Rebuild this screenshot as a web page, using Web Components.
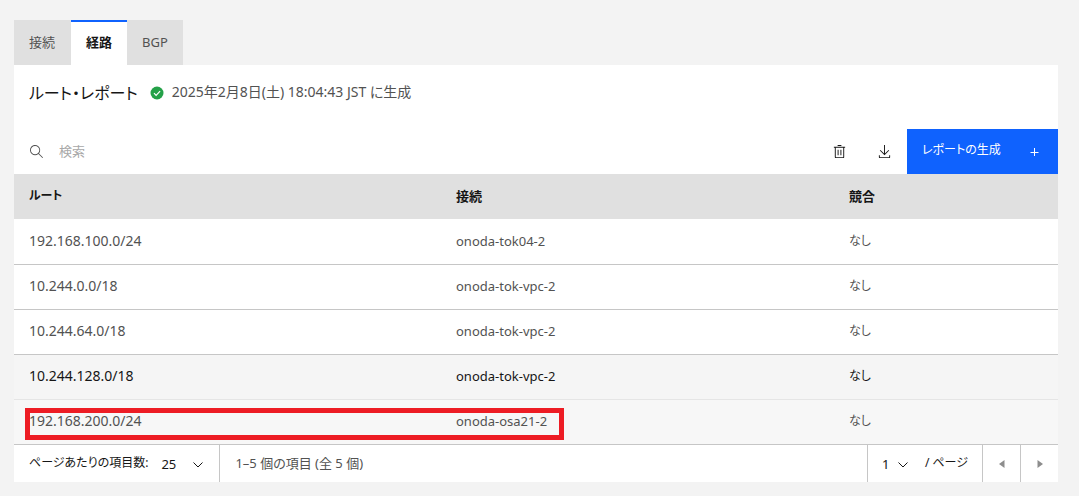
<!DOCTYPE html>
<html lang="ja">
<head>
<meta charset="utf-8">
<meta name="viewport" content="width=device-width, initial-scale=1">
<title>ルート・レポート</title>
<style>
  body {
    --text: #161616;
    --text-secondary: #525252;
    --line: #c6c6c6;
    --accent: #0f62fe;
    margin: 0;
    padding: 20px 21px 14px 14px;
    background: #f3f3f3;
    color: var(--text);
    font: 13px/18px "Noto Sans", "Noto Sans CJK JP", sans-serif;
    font-feature-settings: "palt";
  }
</style>
</head>
<body>
<route-tabs>
  <route-tab>接続</route-tab>
  <route-tab selected>経路</route-tab>
  <route-tab>BGP</route-tab>
</route-tabs>
<report-panel>
  <report-title slot="title" heading="ルート・レポート">2025年2月8日(土) 18:04:43 JST に生成</report-title>
  <report-toolbar>レポートの生成</report-toolbar>
  <route-table></route-table>
  <table-pagination>1–5 個の項目 (全 5 個)</table-pagination>
</report-panel>

<script>
class RouteTabs extends HTMLElement {
  constructor() {
    super();
    this.attachShadow({ mode: "open" });
  }

  connectedCallback() {
    this.shadowRoot.innerHTML = `
      <style>
        :host { display: block; }
        nav { display: flex; }
      </style>
      <nav role="tablist"><slot></slot></nav>
    `;
  }
}

class RouteTab extends HTMLElement {
  constructor() {
    super();
    this.attachShadow({ mode: "open" });
  }

  connectedCallback() {
    this.shadowRoot.innerHTML = `
      <style>
        :host { display: block; }
        :host(:first-child) { border-right: 1px solid #e0e0e0; }
        button {
          display: block;
          height: 45px;
          padding: 0 15px 2px;
          border: 0;
          background: #e0e0e0;
          color: var(--text-secondary);
          font: inherit;
          font-feature-settings: inherit;
          cursor: pointer;
        }
        :host([selected]) button {
          background: #fff;
          box-shadow: inset 0 2px var(--accent);
          color: var(--text);
          font-weight: 600;
        }
      </style>
      <button role="tab" aria-selected="${this.hasAttribute("selected")}"><slot></slot></button>
    `;
  }
}

class ReportPanel extends HTMLElement {
  constructor() {
    super();
    this.attachShadow({ mode: "open" });
  }

  connectedCallback() {
    this.shadowRoot.innerHTML = `
      <style>
        :host { display: block; background: #fff; }
      </style>
      <slot name="title"></slot>
      <slot></slot>
    `;
  }
}

class ReportTitle extends HTMLElement {
  constructor() {
    super();
    this.attachShadow({ mode: "open" });
  }

  connectedCallback() {
    this.shadowRoot.innerHTML = `
      <style>
        :host {
          display: flex;
          align-items: center;
          height: 56px;
          padding: 0 15px 8px;
        }
        h1 { margin: 0 12px 0 0; font-size: 16px; font-weight: 400; line-height: 24px; }
        svg { margin-right: 8px; }
        p { margin: 0; padding-bottom: 2px; color: var(--text-secondary); font-size: 14px; }
      </style>
      <h1>${this.getAttribute("heading")}</h1>
      <svg width="14" height="14" viewBox="0 0 14 14" aria-hidden="true">
        <circle cx="7" cy="7" r="6.5" fill="#24a148"/>
        <path d="M4 7.2l2.1 2.1 4-4.1" fill="none" stroke="#fff" stroke-width="1.2"/>
      </svg>
      <p><slot></slot></p>
    `;
  }
}

class ReportToolbar extends HTMLElement {
  constructor() {
    super();
    this.attachShadow({ mode: "open" });
  }

  connectedCallback() {
    this.shadowRoot.innerHTML = `
      <style>
        :host { display: flex; height: 45px; }
        .search {
          display: flex;
          flex: 1;
          align-items: center;
          gap: 15px;
          padding-left: 15px;
        }
        input {
          flex: 1;
          min-width: 0;
          padding: 0 0 2px;
          border: 0;
          outline: 0;
          background: none;
          color: var(--text);
          font: inherit;
        }
        input::placeholder { color: #a8a8a8; opacity: 1; }
        button {
          display: flex;
          align-items: center;
          border: 0;
          padding: 0;
          font: inherit;
          font-feature-settings: inherit;
          cursor: pointer;
        }
        .icon { justify-content: center; width: 45px; background: none; color: var(--text); }
        .create {
          justify-content: space-between;
          width: 151px;
          padding: 0 15px;
          background: var(--accent);
          color: #fff;
          font-size: 12px;
        }
        .create span { padding-bottom: 3px; }
      </style>
      <label class="search">
        <svg width="15" height="15" viewBox="0 0 16 16" fill="#525252" aria-hidden="true">
          <path d="M15 14.3L10.7 10c1.9-2.3 1.6-5.8-.7-7.7S4.2.7 2.3 3 .7 8.8 3 10.7c2 1.7 5 1.7 7 0l4.3 4.3.7-.7zM2 6.5C2 4 4 2 6.500 2S11 4 11 6.500 9 11 6.500 11 2 9 2 6.500z"/>
        </svg>
        <input type="search" placeholder="検索" aria-label="検索">
      </label>
      <button class="icon" aria-label="削除">
        <svg width="15" height="15" viewBox="0 0 32 32" fill="currentColor" aria-hidden="true">
          <path d="M12 12h2v12h-2zM18 12h2v12h-2zM4 6v2h2v20a2 2 0 002 2h16a2 2 0 002-2V8h2V6zM8 28V8h16v20zM12 2h8v2h-8z"/>
        </svg>
      </button>
      <button class="icon" aria-label="ダウンロード">
        <svg width="15" height="15" viewBox="0 0 32 32" fill="currentColor" aria-hidden="true">
          <path d="M26 24v4H6v-4H4v4a2 2 0 002 2h20a2 2 0 002-2v-4zM26 14l-1.400-1.400L17 20.200V2h-2v18.200l-7.600-7.600L6 14l10 10z"/>
        </svg>
      </button>
      <button class="create">
        <span><slot></slot></span>
        <svg width="16" height="16" viewBox="0 0 16 16" fill="none" stroke="currentColor" aria-hidden="true">
          <path d="M7.500 4v8M3.500 8.500h8"/>
        </svg>
      </button>
    `;
  }
}

const routes = [
  { route: "192.168.100.0/24", connection: "onoda-tok04-2", conflict: "なし" },
  { route: "10.244.0.0/18", connection: "onoda-tok-vpc-2", conflict: "なし" },
  { route: "10.244.64.0/18", connection: "onoda-tok-vpc-2", conflict: "なし" },
  { route: "10.244.128.0/18", connection: "onoda-tok-vpc-2", conflict: "なし", state: "active" },
  { route: "192.168.200.0/24", connection: "onoda-osa21-2", conflict: "なし", state: "leaving" },
];

class RouteTable extends HTMLElement {
  constructor() {
    super();
    this.attachShadow({ mode: "open" });
  }

  connectedCallback() {
    this.shadowRoot.innerHTML = `
      <style>
        :host { display: block; position: relative; }
        table {
          width: 100%;
          table-layout: fixed;
          border-spacing: 0;
        }
        .connection { width: 393px; }
        .conflict { width: 224px; }
        th, td {
          box-sizing: border-box;
          height: 45px;
          padding: 0 15px 2px;
          text-align: left;
        }
        th { background: #e0e0e0; font-weight: 600; }
        th:first-child { font-size: 12px; }
        td { border-top: 1px solid var(--line); color: var(--text-secondary); }
        td:first-child { font-size: 14px; }
        td:last-child { font-size: 12px; }
        tr:first-child td { border-color: transparent; }
        .active td { background: #f5f5f5; color: var(--text); }
        .leaving td { background: #f7f7f7; border-color: #e5e5e5; }
        /* marker drawn over the last row */
        .marker {
          position: absolute;
          box-sizing: border-box;
          left: 11px;
          bottom: 4px;
          width: 539px;
          height: 32px;
          border: 5px solid #ed1c24;
          pointer-events: none;
        }
      </style>
      <table>
        <colgroup><col><col class="connection"><col class="conflict"></colgroup>
        <thead>
          <tr><th scope="col">ルート</th><th scope="col">接続</th><th scope="col">競合</th></tr>
        </thead>
        <tbody>
          ${routes.map((r) => `
            <tr class="${r.state || ""}">
              <td>${r.route}</td><td>${r.connection}</td><td>${r.conflict}</td>
            </tr>`).join("")}
        </tbody>
      </table>
      <div class="marker"></div>
    `;
  }
}

class TablePagination extends HTMLElement {
  constructor() {
    super();
    this.attachShadow({ mode: "open" });
  }

  connectedCallback() {
    const chevron = `
      <svg width="12" height="12" viewBox="0 0 12 12" fill="none" stroke="#161616" aria-hidden="true">
        <path d="M1.500 4.500L6 9l4.500-4.500"/>
      </svg>`;

    this.shadowRoot.innerHTML = `
      <style>
        :host { display: flex; height: 37px; border-top: 1px solid var(--line); }
        .size, .count, .page {
          display: flex;
          align-items: center;
        }
        label, .count { padding-bottom: 2px; }
        label { font-size: 12px; }
        .size { gap: 13px; padding: 0 15px; border-right: 1px solid var(--line); }
        .count { flex: 1; padding-left: 15px; color: var(--text-secondary); }
        .page { gap: 16px; padding: 0 14px; border-left: 1px solid var(--line); }
        .select { display: grid; align-items: center; }
        .select > * { grid-area: 1 / 1; }
        .select svg { justify-self: end; pointer-events: none; }
        select {
          appearance: none;
          width: 43px;
          padding: 0;
          border: 0;
          background: none;
          color: var(--text);
          font: inherit;
        }
        .page select { width: 27px; }
        button {
          display: flex;
          align-items: center;
          justify-content: center;
          width: 38px;
          padding: 0;
          border: 0;
          border-left: 1px solid var(--line);
          background: none;
        }
      </style>
      <div class="size">
        <label for="size">ページあたりの項目数:</label>
        <span class="select">
          <select id="size"><option>25</option></select>
          ${chevron}
        </span>
      </div>
      <span class="count"><slot></slot></span>
      <div class="page">
        <span class="select">
          <select id="page"><option>1</option></select>
          ${chevron}
        </span>
        <label for="page">/ ページ</label>
      </div>
      <button aria-label="前のページ" disabled>
        <svg width="6" height="8" viewBox="0 0 6 8" fill="#8d8d8d" aria-hidden="true"><path d="M5.500 0v8L0 4z"/></svg>
      </button>
      <button aria-label="次のページ" disabled>
        <svg width="6" height="8" viewBox="0 0 6 8" fill="#8d8d8d" aria-hidden="true"><path d="M.5 0v8L6 4z"/></svg>
      </button>
    `;
  }
}

customElements.define("route-tabs", RouteTabs);
customElements.define("route-tab", RouteTab);
customElements.define("report-panel", ReportPanel);
customElements.define("report-title", ReportTitle);
customElements.define("report-toolbar", ReportToolbar);
customElements.define("route-table", RouteTable);
customElements.define("table-pagination", TablePagination);
</script>
</body>
</html>
